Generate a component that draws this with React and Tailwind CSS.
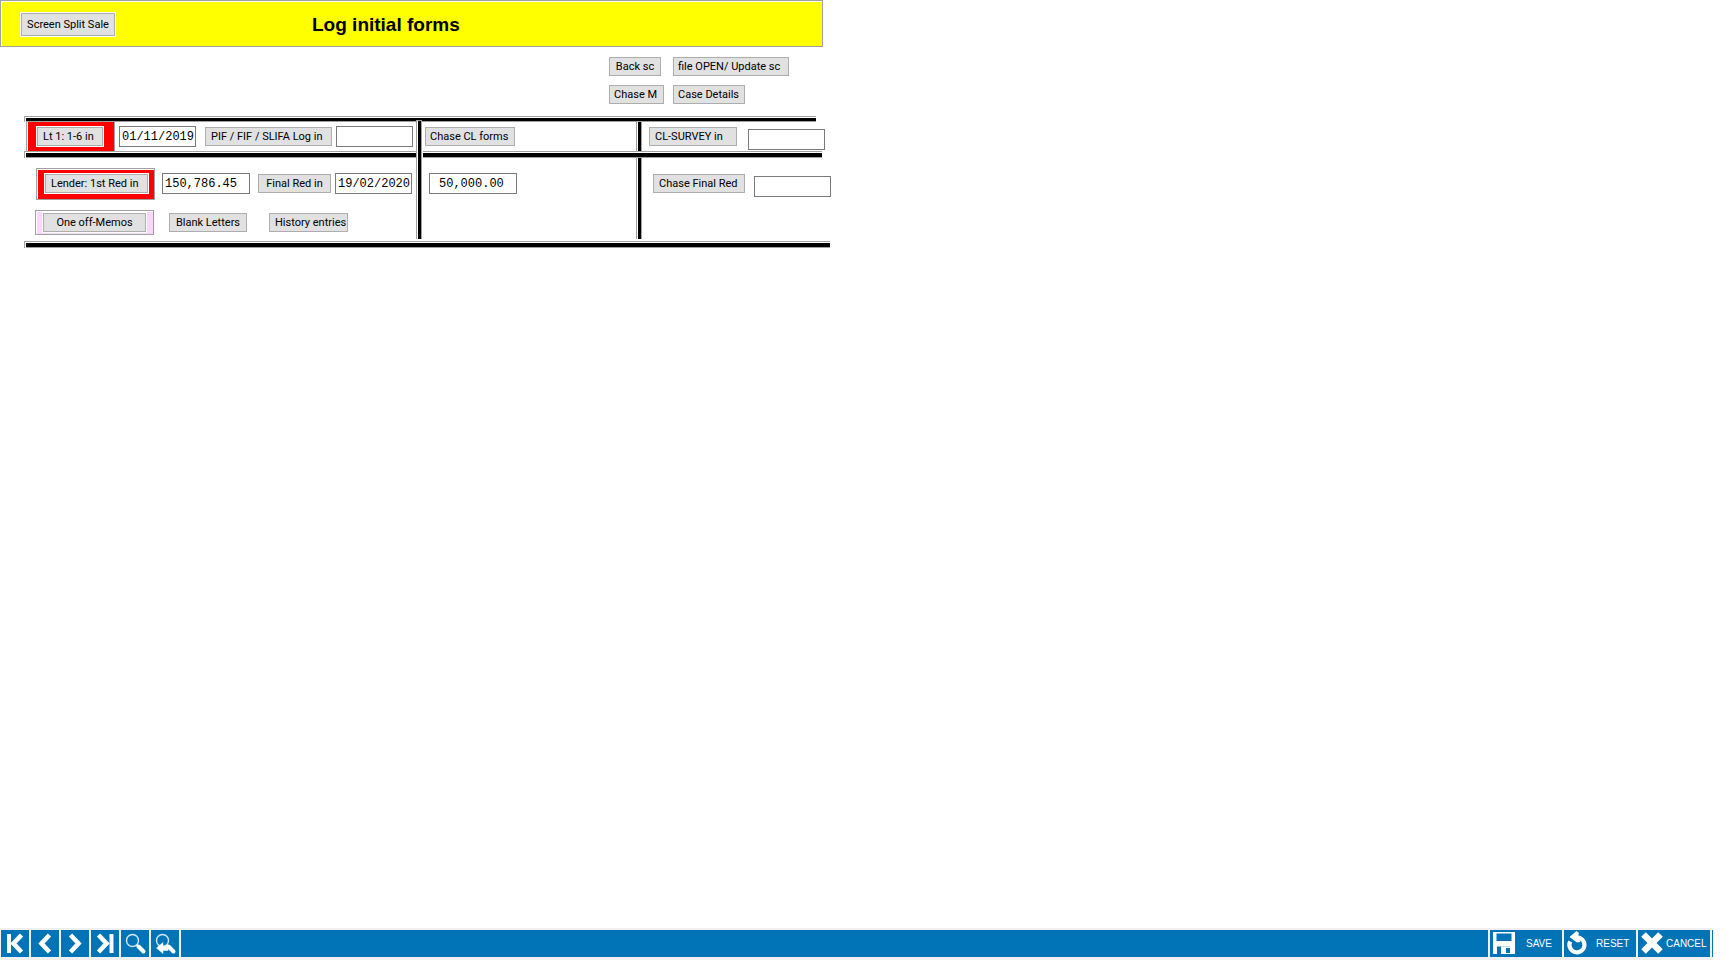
import { clsx } from 'clsx';

function FormButton({ children, className }) {
  return (
    <button
      type="button"
      className={clsx(
        'h-[19px] shrink-0 whitespace-nowrap border border-[#adadad] bg-[#e1e1e1] px-1 pt-px font-[Roboto,sans-serif] text-[11px] leading-4 text-black',
        className,
      )}
    >
      {children}
    </button>
  );
}

function Field({ label, value = '', className }) {
  return (
    <input
      type="text"
      aria-label={label}
      defaultValue={value}
      className={clsx(
        'h-[21px] shrink-0 border border-[#7a7a7a] bg-white font-["Liberation_Mono",monospace] text-[12px] leading-[19px] text-black',
        className,
      )}
    />
  );
}

function HRule({ className, thickness = 'h-1' }) {
  return (
    <div className={clsx('border-t border-[#a0a0a0] pt-px', className)}>
      <div className={clsx('box-content border-b border-[#a0a0a0] bg-black', thickness)} />
    </div>
  );
}

function VRule({ className }) {
  return (
    <div className={clsx('flex w-1.5 shrink-0 border-l border-[#a0a0a0] bg-white pl-px', className)}>
      <div className="flex-1 border-r border-[#a0a0a0] bg-black" />
    </div>
  );
}

function NavButton({ label, children }) {
  return (
    <button type="button" aria-label={label} className="h-[27px] w-7 shrink-0 bg-[#0173b7]">
      <svg viewBox="0 0 28 27" className="block h-[27px] w-7" fill="none" stroke="#fff">
        {children}
      </svg>
    </button>
  );
}

function ActionButton({ label, textClass, children }) {
  return (
    <button
      type="button"
      className="flex h-[27px] w-[72px] shrink-0 items-center bg-[#0173b7] font-['Liberation_Sans',sans-serif] text-[10px] leading-3 text-white"
    >
      <svg viewBox="0 0 28 27" className="h-[27px] w-7 shrink-0" fill="none" stroke="#fff">
        {children}
      </svg>
      <span className={textClass}>{label}</span>
    </button>
  );
}

function Magnifier() {
  return (
    <>
      <circle cx="11.5" cy="10.5" r="6" strokeWidth="1.4" stroke="#d5e9f5" />
      <path d="M16 15l2 2" strokeWidth="2" />
      <path d="M17.5 16.5l5 5" strokeWidth="4" strokeLinecap="round" />
    </>
  );
}

export default function App() {
  return (
    <div className="flex min-h-screen flex-col bg-white text-black">
      <header className="w-full max-w-[823px] border border-[#a0a0a0] pl-px pt-px">
        <div className="flex h-11 items-center bg-[#ffff00] pl-[19px]">
          <FormButton className="h-[23px] w-[94px] ring-1 ring-white">Screen Split Sale</FormButton>
          <h1 className="ml-[197px] whitespace-nowrap pt-px font-['Liberation_Sans',sans-serif] text-[19px] font-bold leading-6">
            Log initial forms
          </h1>
        </div>
      </header>

      <main className="flex-1">
        <div className="flex w-full max-w-[823px] justify-end pb-3 pr-[34px] pt-2.5">
          <div className="grid grid-cols-[64px_116px] justify-items-start gap-y-[9px]">
            <FormButton className="w-[52px]">Back sc</FormButton>
            <FormButton className="w-[116px] text-left">file OPEN/ Update sc</FormButton>
            <FormButton className="w-[55px] text-left">Chase M</FormButton>
            <FormButton className="w-[72px] text-left">Case Details</FormButton>
          </div>
        </div>

        <form className="ml-6 w-full max-w-[807px]">
          <HRule thickness="h-[3px]" className="mr-[15px] border-l pl-px" />
          <div className="flex">
            <section className="w-[392px] shrink-0">
              <div className="flex h-[29px] items-center pl-0.5">
                <div className="flex w-[89px] items-center self-stretch border-x border-[#a0a0a0] pl-px">
                  <div className="flex h-full flex-1 items-center bg-[#ff0000] pl-[9px]">
                    <FormButton className="w-[66px] pl-[5px] text-left ring-1 ring-white">Lt 1: 1-6 in</FormButton>
                  </div>
                </div>
                <Field label="Letter 1 date" value="01/11/2019" className="ml-1 w-[77px] pl-0.5" />
                <FormButton className="ml-[9px] w-[127px] pl-[5px] text-left">PIF / FIF / SLIFA Log in</FormButton>
                <Field label="PIF / FIF / SLIFA date" className="ml-1 w-[77px]" />
              </div>
              <HRule className="border-l pl-px" />
              <div className="flex flex-col gap-2.5 pb-1.5 pt-2.5">
                <div className="flex h-8 items-center pb-px pl-3">
                  <div className="flex h-8 w-[119px] self-start border border-[#a0a0a0] pl-px pt-px">
                    <div className="flex flex-1 items-start bg-[#ff0000] pl-[7px] pt-1">
                      <FormButton className="w-[103px] pl-[5px] text-left ring-1 ring-white">Lender: 1st Red in</FormButton>
                    </div>
                  </div>
                  <Field label="First redemption amount" value="150,786.45" className="ml-[7px] w-[88px] pl-0.5" />
                  <FormButton className="ml-2 w-[73px]">Final Red in</FormButton>
                  <Field label="Final redemption date" value="19/02/2020" className="ml-1 w-[77px] pl-0.5" />
                </div>
                <div className="flex h-[25px] items-center pl-[11px]">
                  <div className="flex h-[25px] w-[119px] border border-[#a0a0a0] pl-px pt-px">
                    <div className="flex flex-1 items-start bg-[#f8d7fb] pl-1.5 pt-px">
                      <FormButton className="w-[103px] ring-1 ring-white">One off-Memos</FormButton>
                    </div>
                  </div>
                  <FormButton className="ml-[15px] w-[78px]">Blank Letters</FormButton>
                  <FormButton className="ml-[22px] w-[79px] pl-[5px] text-left">History entries</FormButton>
                </div>
              </div>
            </section>

            <VRule className="-mt-0.5 mb-0.5 mr-px border-t" />

            <section className="flex min-w-0 flex-1 flex-col">
              <div className="flex h-[29px] items-center">
                <div className="w-[213px] shrink-0 pl-0.5">
                  <FormButton className="block w-[90px] text-left">Chase CL forms</FormButton>
                </div>
                <VRule className="self-stretch" />
                <FormButton className="ml-[7px] w-[88px] pl-[5px] text-left">CL-SURVEY in</FormButton>
                <Field label="CL survey date" className="mb-px ml-[11px] w-[77px] self-end" />
              </div>
              <HRule className="mr-[9px]" />
              <div className="flex flex-1 pb-0.5">
                <div className="w-[213px] shrink-0 pl-1.5 pt-[15px]">
                  <Field label="Chase amount" value="50,000.00" className="block w-[88px] pl-[9px]" />
                </div>
                <VRule />
                <div className="flex items-start gap-[9px] pl-[11px] pt-4">
                  <FormButton className="w-[92px] pl-[5px] text-left">Chase Final Red</FormButton>
                  <Field label="Chase final redemption date" className="mt-0.5 w-[77px]" />
                </div>
              </div>
            </section>
          </div>
          <HRule className="mr-px border-l pl-px" />
        </form>
      </main>

      <footer className="mr-[15px] flex gap-0.5 bg-[#f0f0f0] pb-[3px] pl-px pt-0.5">
        <NavButton label="First record">
          <path d="M8 4v19" strokeWidth="4" />
          <path d="M20.5 5l-8 8.5 8 8.5" strokeWidth="4.6" />
        </NavButton>
        <NavButton label="Previous record">
          <path d="M18.5 5l-8 8.5 8 8.5" strokeWidth="4.6" />
        </NavButton>
        <NavButton label="Next record">
          <path d="M9.5 5l8 8.5-8 8.5" strokeWidth="4.6" />
        </NavButton>
        <NavButton label="Last record">
          <path d="M7.5 5l8 8.5-8 8.5" strokeWidth="4.6" />
          <path d="M20.5 4v19" strokeWidth="4" />
        </NavButton>
        <NavButton label="Search">
          <Magnifier />
        </NavButton>
        <NavButton label="Previous search">
          <Magnifier />
          <path d="M5.5 18l6.5-5.5v3.5h5v4.5h-5v3z" fill="#fff" strokeWidth="0.5" />
        </NavButton>
        <div className="flex-1 bg-[#0173b7]" />
        <ActionButton label="SAVE" textClass="ml-2">
          <path d="M3 2h22v22h-22z" fill="#fff" stroke="none" />
          <path d="M6.5 3.5h15v7.5h-15z M7 16.5h13.5v7.5h-13.5z" fill="#0173b7" stroke="none" />
          <path d="M11 16.500h10v7.500h-10z" fill="#fff" stroke="none" />
          <path d="M16 18h4v5h-4z" fill="#0173b7" stroke="none" />
        </ActionButton>
        <ActionButton label="RESET" textClass="ml-1">
          <path d="M6.200 11.500a7.500 7.500 0 1 0 6.300-4.200" strokeWidth="4.200" />
          <path d="M12.500 1l2.500 2-1 3.500 2.500 5.500-3.500.5-7.500-5.500z" fill="#fff" stroke="none" />
        </ActionButton>
        <ActionButton label="CANCEL" textClass="">
          <path d="M5.500 4.500l17 17M22.500 4.500l-17 17" strokeWidth="6.500" />
        </ActionButton>
        <div className="w-px bg-[#0173b7]" />
      </footer>
    </div>
  );
}
